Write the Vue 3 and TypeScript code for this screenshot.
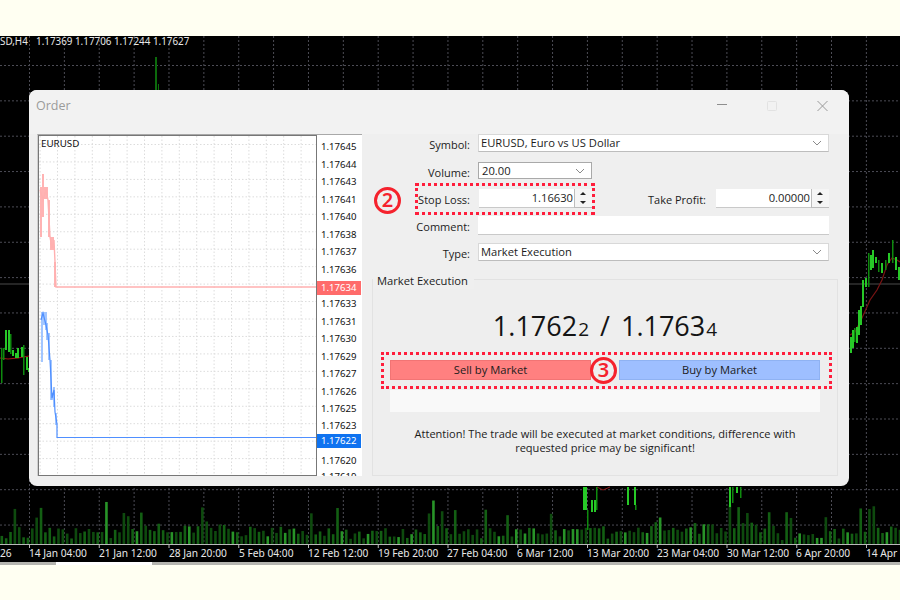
<script setup lang="ts">
const prices: [string, number][] = [
  ['1.17645', 146], ['1.17644', 164], ['1.17643', 181], ['1.17641', 199], ['1.17640', 216],
  ['1.17638', 234], ['1.17637', 251], ['1.17636', 269], ['1.17633', 303], ['1.17631', 321],
  ['1.17630', 338], ['1.17629', 356], ['1.17627', 373], ['1.17626', 391], ['1.17625', 408],
  ['1.17623', 425], ['1.17620', 460], ['1.17619', 476],
]
const miniV = Array.from({ length: 16 }, (_, i) => 57.5 + i * 17.4 - 17.4)
const miniH = Array.from({ length: 20 }, (_, i) => 144.5 + i * 17.45)

const gridV = Array.from({ length: 26 }, (_, i) => 29.5 + i * 34.87)
const gridH = Array.from({ length: 14 }, (_, i) => 65.5 + i * 35.35)
const ticks = Array.from({ length: 13 }, (_, i) => 29.5 + i * 69.75)
const dates: [string, number][] = [
  ['26', 0], ['14 Jan 04:00', 29], ['21 Jan 12:00', 99], ['28 Jan 20:00', 169], ['5 Feb 04:00', 239],
  ['12 Feb 12:00', 308], ['19 Feb 20:00', 378], ['27 Feb 04:00', 447], ['6 Mar 12:00', 517],
  ['13 Mar 20:00', 587], ['23 Mar 04:00', 657], ['30 Mar 12:00', 727], ['6 Apr 20:00', 796], ['14 Apr 04:00', 866],
]

let seed = 17
const rnd = () => {
  seed = (seed * 16807) % 2147483647
  return seed / 2147483647
}
const bars = Array.from({ length: 208 }, (_, i) => {
  const x = i * 4.36 + 0.5
  const hump = x > 130 && x < 240 ? 6 : x > 620 && x < 760 ? 4 : 0
  const low = x > 770 && x < 800 ? -5 : 0
  const r = rnd()
  const spike = r > 0.88 ? 12 + rnd() * 14 : 0
  const h = Math.max(4, 5 + rnd() * 13 + hump + low + spike)
  const c = rnd()
  return { x, h, color: c > 0.85 ? '#289428' : c > 0.45 ? '#135f13' : '#0e4a0e' }
})

const candles: [number, number, number, number][] = [
  // x, high, low, width
  [1, 348, 383, 1.5], [3, 348, 360, 1.5], [5, 330, 350, 2], [8, 330, 352, 2], [10, 334, 354, 1.5],
  [12, 350, 356, 2], [15, 353, 358, 2], [17, 348, 358, 2], [21, 347, 357, 2], [23, 345, 375, 1.5],
  [26, 357, 370, 2], [28, 368, 372, 2],
  [850, 337, 353, 2], [852, 330, 348, 2], [854, 328, 342, 1.5], [856, 327, 343, 2], [858, 310, 335, 2],
  [860, 306, 325, 2], [862, 280, 307, 2], [865, 278, 287, 2], [868, 253, 287, 1.5], [870, 255, 270, 2],
  [872, 250, 268, 2], [875, 257, 263, 2], [878, 260, 272, 1.5], [881, 263, 273, 2], [885, 260, 270, 1.5],
  [888, 253, 263, 2], [892, 240, 263, 1.5], [895, 257, 270, 2], [898, 267, 280, 2],
  [583, 487, 510, 4], [587, 510, 530, 1.5], [591, 500, 512, 2], [594, 500, 512, 2], [596, 487, 510, 1.5],
  [627, 487, 505, 2], [634, 487, 505, 2], [635, 505, 510, 1.5],
  [729, 487, 507, 2], [732, 487, 503, 1.5], [736, 487, 493, 2], [740, 487, 498, 1.5],
]
const ma =
  '850,335 855,332 862,318 870,300 877,290 882,280 887,265 892,258 897,260 900,262'
const maLeft = '0,358 8,359 18,358 29,356'
</script>

<template>
  <div class="page">
    <div class="band"></div>
    <div class="chart">
      <svg class="chart-svg" viewBox="0 36 900 526" width="900" height="526">
        <line v-for="x in gridV" :key="'v' + x" :x1="x" :x2="x" y1="36" y2="544" class="dot" />
        <line v-for="y in gridH" :key="'h' + y" x1="0" x2="900" :y1="y" :y2="y" class="dot" />
        <line x1="0" x2="900" y1="284" y2="284" stroke="#4a4a4a" />
        <rect x="155" y="57" width="2" height="34" fill="#0c6a0c" />
        <rect x="158" y="84" width="1" height="7" fill="#0c6a0c" />
        <rect
          v-for="b in bars"
          :key="b.x"
          :x="b.x"
          :y="544 - b.h"
          width="2.6"
          :height="b.h"
          :fill="b.color"
        />
        <polyline :points="ma" fill="none" stroke="#7a1414" stroke-width="1.2" />
        <polyline :points="maLeft" fill="none" stroke="#a31616" stroke-width="1.2" />
        <polyline points="597,487 603,490 610,487" fill="none" stroke="#8a1616" />
        <rect
          v-for="c in candles"
          :key="c[0]"
          :x="c[0]"
          :y="c[1]"
          :width="c[3]"
          :height="c[2] - c[1]"
          :fill="c[3] > 1.7 ? '#27c927' : '#0e8a0e'"
        />
        <line x1="0" x2="900" y1="544.5" y2="544.5" stroke="#b9b9b9" />
        <line v-for="x in ticks" :key="'t' + x" :x1="x" :x2="x" y1="544" y2="548" stroke="#b9b9b9" />
        <text x="0" y="45" class="t head">SD,H4</text>
        <text x="36" y="45" class="t head">1.17369 1.17706 1.17244 1.17627</text>
        <text v-for="d in dates" :key="d[0]" :x="d[1]" y="557" class="t">{{ d[0] }}</text>
      </svg>

      <div class="dialog">
        <div class="titlebar">
          <span class="title">Order</span>
          <svg class="winctl" width="112" height="12" viewBox="0 0 112 12">
            <line x1="0" x2="10" y1="4.5" y2="4.5" stroke="#8e8e8e" />
            <rect x="50.5" y="1.5" width="9" height="9" rx="1" fill="none" stroke="#e2e2e2" />
            <path d="M100.5 1 L110.5 11 M110.5 1 L100.5 11" stroke="#9a9a9a" fill="none" />
          </svg>
        </div>

        <div class="body">
          <div class="mini">
            <div class="plot">
              <svg class="plot-svg" viewBox="39 136 277 339" width="277" height="339">
                <line v-for="x in miniV" :key="'mv' + x" :x1="x" :x2="x" y1="136" y2="475" class="mdot" />
                <line v-for="y in miniH" :key="'mh' + y" x1="39" x2="316" :y1="y" :y2="y" class="mdot" />
                <path
                  d="M41 187V237 M43 174V217 M45 187V199 M47 187V199 M49 200V237 M51 237V250 M53 237V250 M55 262V287"
                  stroke="#ffb3b3"
                  stroke-width="2"
                  fill="none"
                />
                <polyline
                  points="40,190 43,200 46,190 48,200 50,237 52,248 54,240 55,262 56,287 316,287"
                  fill="none"
                  stroke="#ffb0b0"
                  stroke-width="1.4"
                />
                <path
                  d="M42 312V362 M44 312V325 M46 312V330 M47 323V340 M49 333V360 M51 360V400 M52 393V400 M54 387V407 M56 413V425"
                  stroke="#8db9ff"
                  stroke-width="1.6"
                  fill="none"
                />
                <polyline
                  points="41,320 43,313 46,325 48,335 50,360 52,398 54,390 55,412 57,424 57,437.5 316,437.5"
                  fill="none"
                  stroke="#4f8fff"
                  stroke-width="1.2"
                />
                <text x="41" y="147" class="mini-sym">EURUSD</text>
              </svg>
            </div>
            <div class="scale">
              <span
                v-for="p in prices"
                :key="p[0]"
                class="scale-label"
                :style="{ top: p[1] - 135 + 'px' }"
              >{{ p[0] }}</span>
              <span class="scale-tag sell" style="top: 146px">1.17634</span>
              <span class="scale-tag buy" style="top: 299px">1.17622</span>
            </div>
          </div>

          <div class="side">
            <div class="form">
              <div class="row first">
                <label>Symbol:</label>
                <div class="ctl select wide">
                  <span>EURUSD, Euro vs US Dollar</span>
                  <svg width="10" height="6" viewBox="0 0 10 6"><path d="M1 1 L5 5 L9 1" fill="none" stroke="#8a8a8a" /></svg>
                </div>
              </div>
              <div class="row">
                <label>Volume:</label>
                <div class="ctl select vol">
                  <span>20.00</span>
                  <svg width="10" height="6" viewBox="0 0 10 6"><path d="M1 1 L5 5 L9 1" fill="none" stroke="#8a8a8a" /></svg>
                </div>
              </div>
              <div class="row">
                <label>Stop Loss:</label>
                <div class="spin">
                  <div class="spin-val">1.16630</div>
                  <div class="spin-btns">
                    <svg width="18" height="9" viewBox="0 0 18 9"><path d="M6 6 L9 3 L12 6 Z" fill="#222" /></svg>
                    <svg width="18" height="9" viewBox="0 0 18 9"><path d="M6 3 L9 6 L12 3 Z" fill="#222" /></svg>
                  </div>
                </div>
                <label class="tp">Take Profit:</label>
                <div class="spin second">
                  <div class="spin-val">0.00000</div>
                  <div class="spin-btns">
                    <svg width="18" height="9" viewBox="0 0 18 9"><path d="M6 6 L9 3 L12 6 Z" fill="#222" /></svg>
                    <svg width="18" height="9" viewBox="0 0 18 9"><path d="M6 3 L9 6 L12 3 Z" fill="#222" /></svg>
                  </div>
                </div>
              </div>
              <div class="row">
                <label>Comment:</label>
                <div class="ctl wide comment"></div>
              </div>
              <div class="row">
                <label>Type:</label>
                <div class="ctl select wide">
                  <span>Market Execution</span>
                  <svg width="10" height="6" viewBox="0 0 10 6"><path d="M1 1 L5 5 L9 1" fill="none" stroke="#8a8a8a" /></svg>
                </div>
              </div>
            </div>

            <div class="group">
              <div class="legend">Market Execution</div>
              <div class="quote">1.1762<small>2</small> / 1.1763<small>4</small></div>
              <div class="buttons">
                <div class="btn sell-btn">Sell by Market</div>
                <div class="btn buy-btn">Buy by Market</div>
              </div>
              <div class="status"></div>
              <p class="note">
                Attention! The trade will be executed at market conditions, difference with<br />
                requested price may be significant!
              </p>
            </div>
          </div>
        </div>

        <div class="mark box-sl"></div>
        <div class="mark box-mk"></div>
        <div class="num num2">2</div>
        <div class="num num3">3</div>
      </div>
    </div>
    <div class="bottom">
      <div class="tab"></div>
    </div>
  </div>
</template>

<style>
html,
body {
  margin: 0;
  background: #fffff2;
}
</style>

<style scoped>
.page {
  width: 900px;
  height: 600px;
  overflow: hidden;
  background: #fffff2;
  font-family: "Open Sans", "Noto Sans", sans-serif;
  color: #1c1c1c;
}
.band {
  height: 36px;
}
.chart {
  position: relative;
  height: 526px;
  background: #000;
}
.chart-svg {
  display: block;
}
.dot {
  stroke: #4c4c55;
  stroke-dasharray: 2 2;
}
.t {
  fill: #e8e8e8;
  font-family: "Noto Sans", sans-serif;
  font-size: 10.2px;
}
.t.head {
  font-size: 9.85px;
}
.bottom {
  height: 38px;
  border-top: 3px solid #b5b5b0;
  box-sizing: border-box;
  position: relative;
}
.tab {
  position: absolute;
  left: 56px;
  top: -3px;
  width: 96px;
  height: 3px;
  background: #fff;
}
.dialog {
  position: absolute;
  left: 29px;
  top: 54px;
  width: 820px;
  height: 396px;
  box-sizing: border-box;
  background: #efefef;
  border-radius: 8px;
}
.titlebar {
  height: 44px;
  display: flex;
  align-items: flex-start;
  justify-content: space-between;
  padding: 8px 20px 0 7px;
  box-sizing: border-box;
  background: #f2f2f2;
  border-radius: 8px 8px 0 0;
}
.title {
  font-size: 12.5px;
  color: #9b9b9b;
  line-height: 15px;
}
.winctl {
  margin-top: 2px;
}
.body {
  display: flex;
  padding: 0 11px 0 8px;
  gap: 10px;
}
.mini {
  display: flex;
  width: 325px;
  height: 342px;
  background: #fff;
  box-sizing: border-box;
  border-top: 1px solid #a8a8a8;
  border-left: 1px solid #d0d0d0;
}
.plot {
  width: 277px;
  height: 339px;
  border: 1px solid #777;
}
.plot-svg {
  display: block;
}
.mdot {
  stroke: #dcdcdc;
  stroke-dasharray: 1.5 2;
}
.mini-sym {
  font-size: 9.8px;
  fill: #111;
  font-family: "Noto Sans", sans-serif;
}
.scale {
  position: relative;
  flex: 1;
  overflow: hidden;
}
.scale-label,
.scale-tag {
  position: absolute;
  left: 4px;
  font-family: "Noto Sans", sans-serif;
  font-size: 9.6px;
  line-height: 13px;
  margin-top: -6px;
  color: #111;
}
.scale-tag {
  left: 0;
  width: 44px;
  height: 14px;
  margin-top: 0;
  padding-left: 4px;
  box-sizing: border-box;
  color: #fff;
}
.scale-tag.sell {
  background: #ff6b6b;
}
.scale-tag.buy {
  background: #0f73f0;
}
.side {
  width: 466px;
}
.form {
  font-size: 11.2px;
}
.row {
  height: 27px;
  display: flex;
  align-items: flex-start;
}
.row.first {
  height: 28px;
}
label {
  width: 98px;
  flex: none;
  text-align: right;
  line-height: 18px;
  padding-top: 2px;
  font-size: 11px;
}
.ctl {
  margin-left: 8px;
  height: 18px;
  box-sizing: border-box;
  background: #fff;
  border: 1px solid #d8d8d8;
  border-bottom-color: #bdbdbd;
  display: flex;
  align-items: center;
  justify-content: space-between;
  padding: 0 6px 0 2px;
  line-height: 16px;
}
.wide {
  width: 351px;
}
.vol {
  width: 114px;
  height: 17px;
  border-color: #a9a9a9;
  padding-left: 3px;
}
.comment {
  height: 19px;
  border: none;
  border-bottom: 1px solid #c9c9c9;
}
.spin {
  margin-left: 9px;
  width: 113px;
  height: 19px;
  display: flex;
  flex: none;
}
.spin.second {
  margin-left: 10px;
}
.spin-val {
  width: 95px;
  box-sizing: border-box;
  background: #fff;
  border-bottom: 1px solid #c9c9c9;
  text-align: right;
  padding-right: 1px;
  line-height: 17px;
}
.spin-btns {
  width: 18px;
  display: flex;
  flex-direction: column;
  background: #f5f5f5;
  border-bottom: 1px solid #bdbdbd;
  box-shadow: inset 1px 0 #bdbdbd;
}
.spin-btns svg {
  display: block;
}
.tp {
  width: 114px;
  margin-left: 0;
}
.group {
  margin-top: 9px;
  width: 466px;
  height: 197px;
  box-sizing: border-box;
  border: 1px solid #e2e2e2;
  background: #eeeeee;
  display: flex;
  flex-direction: column;
  align-items: center;
  font-size: 11.2px;
}
.legend {
  align-self: flex-start;
  margin: -7px 0 0 0;
  padding: 0 6px 0 4px;
  background: #efefef;
  line-height: 16px;
}
.quote {
  font-size: 27px;
  line-height: 34px;
  margin-top: 20px;
  color: #141414;
  word-spacing: 4px;
}
.quote small {
  font-size: 19px;
  line-height: 0;
  margin-left: 1px;
}
.buttons {
  margin-top: 17px;
  width: 430px;
  display: flex;
  justify-content: space-between;
}
.btn {
  width: 201px;
  height: 20px;
  line-height: 20px;
  text-align: center;
  box-sizing: border-box;
}
.sell-btn {
  background: #ff8080;
  box-shadow: inset 0 0 0 1px #f27474;
}
.buy-btn {
  background: #9ebfff;
  box-shadow: inset 0 0 0 1px #8fb2f2;
}
.status {
  margin-top: 10px;
  width: 430px;
  height: 22px;
  background: #f9f9f9;
}
.note {
  margin: 15px 0 0;
  text-align: center;
  line-height: 13.5px;
  font-size: 11.05px;
}
.mark {
  position: absolute;
  border: 3px dotted #ff1e3c;
  box-sizing: border-box;
}
.box-sl {
  left: 386px;
  top: 93px;
  width: 180px;
  height: 32px;
}
.box-mk {
  left: 352px;
  top: 262px;
  width: 451px;
  height: 37px;
}
.num {
  position: absolute;
  width: 27px;
  height: 27px;
  box-sizing: border-box;
  border: 3px solid #f5222d;
  border-radius: 50%;
  background: #efefef;
  color: #f5222d;
  font-family: "Noto Sans", sans-serif;
  font-weight: 600;
  font-size: 20px;
  line-height: 20px;
  text-align: center;
}
.num2 {
  left: 345px;
  top: 97px;
}
.num3 {
  left: 561px;
  top: 267px;
}
</style>
